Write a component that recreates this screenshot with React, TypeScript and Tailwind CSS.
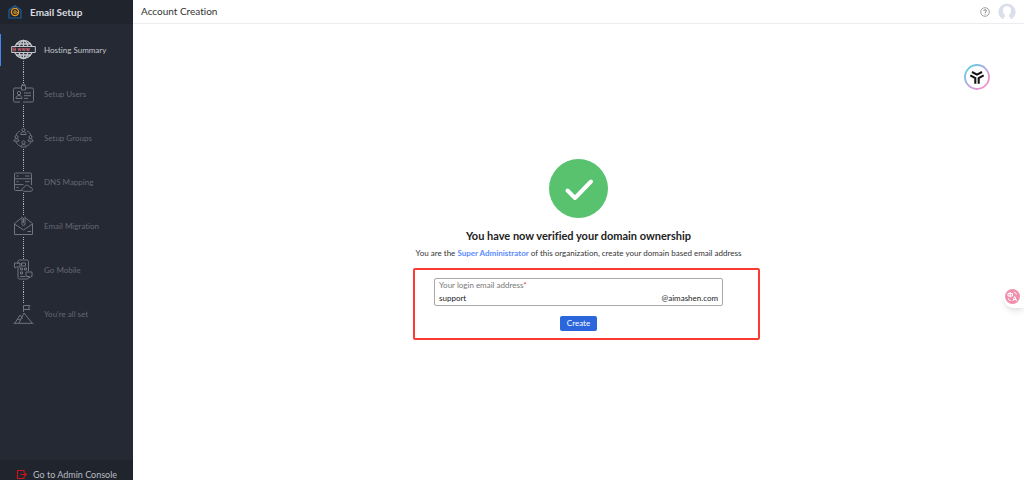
import React from 'react';

interface Step {
  label: string;
  icon: React.ReactNode;
}

const steps: Step[] = [
  {
    label: 'Hosting Summary',
    icon: (
      <>
        <g strokeWidth="1.4">
          <circle cx="12.5" cy="10.5" r="9" />
          <ellipse cx="12.5" cy="10.5" rx="4.5" ry="9" />
          <path d="M12.5 1v19M5 5h15M5 16h15" />
        </g>
        <path d="M.7 7.5h23.6v6H.7z" fill="#252934" />
        <path d="M2 9h2.6v3H2zM2 10.5h2.6M7 9l.8 3 .8-3 .8 3 .8-3M11.2 9l.8 3 .8-3 .8 3 .8-3M15.4 9l.8 3 .8-3 .8 3 .8-3" stroke="#c95f68" strokeWidth=".8" />
      </>
    ),
  },
  {
    label: 'Setup Users',
    icon: (
      <>
        <path d="M10.5 5H4a1.5 1.5 0 0 0-1.5 1.5v11A1.5 1.5 0 0 0 4 19h5M14.5 5H21a1.5 1.5 0 0 1 1.5 1.5v11A1.5 1.5 0 0 1 21 19h-9" />
        <path d="M10.5 2.5h4v4.500h-4zM11.5 2.500V1h2v1.500" />
        <circle cx="8" cy="10" r="1.7" />
        <path d="M5 15.5c0-4 6-4 6 0zM13 10h7M13 12.7h7M13 15.4h4" />
      </>
    ),
  },
  {
    label: 'Setup Groups',
    icon: (
      <>
        <path d="M9 4C7 5 5.6 6.5 5 8.5M16 4c2 1 3.4 2.5 4 4.500M5 15c.8 1.7 2 3 4 4M20 15c-.8 1.7-2 3-4 4" />
        <circle cx="12.5" cy="3" r="1.6" />
        <path d="M9.8 7.5c0-3.6 5.4-3.6 5.4 0z" />
        <circle cx="5.5" cy="10" r="1.5" />
        <path d="M3 14.2c0-3.4 5-3.4 5 0z" />
        <circle cx="19.5" cy="10" r="1.5" />
        <path d="M17 14.2c0-3.4 5-3.4 5 0z" />
        <circle cx="12.5" cy="15.5" r="1.6" />
        <path d="M9.8 20c0-3.6 5.4-3.6 5.4 0z" />
      </>
    ),
  },
  {
    label: 'DNS Mapping',
    icon: (
      <>
        <path d="M4.5 2h15a1 1 0 0 1 1 1v11M11 19.5H4.500a1 1 0 0 1-1-1V3a1 1 0 0 1 1-1M3.5 7.8h17M3.5 13.6h9" />
        <path d="M5.5 5h2M14 5h4.5M5.5 10.7h2M14 10.7h4.5M5.5 16.5h2" />
        <path d="M12.5 20.3c-2.400-1-1.500-3.700.5-3.600.7-3.200 4.900-3.200 5.600-.5 3.300-.2 3.700 3.500 1.500 4.100z" fill="#252934" />
      </>
    ),
  },
  {
    label: 'Email Migration',
    icon: (
      <>
        <path d="M10.5 3 3.5 8.5v11h18v-11L14.5 3" />
        <path d="m3.5 9 9 6 9-6M16.5 16.5H20" />
        <path d="M11 1.5v7.500a1.5 1.5 0 0 0 3 0V1.500M12.5 3v5" />
      </>
    ),
  },
  {
    label: 'Go Mobile',
    icon: (
      <>
        <path d="M7 5V2.500A1.500 1.500 0 0 1 8.500 1H16a1.500 1.500 0 0 1 1.500 1.500V12M7 9v9.500A1.500 1.500 0 0 0 8.500 20H16a1.500 1.500 0 0 0 1.500-1.500V18" />
        <path d="M3.5 4H9v4H5.500L4 9V8h-.5zM15 13h6v4.500h-1L18.500 19v-1.500H15z" />
        <path d="M10.5 4h4v3h-4zM9.5 9h2v2h-2zM13.5 9h2v2h-2zM9.5 13h2v2h-2zM9 17.5h5" />
      </>
    ),
  },
  {
    label: "You're all set",
    icon: (
      <>
        <path d="M2.5 20.3h20" />
        <path d="m4 20 5-8 2.5 3.5M8 20l5-10 8 10M6.5 16l2 1 1.5-1.5" />
        <path d="M12.5 9V2.500h6.300L17.500 5l1.300 1.500h-6.300" />
      </>
    ),
  },
];

function StepItem({ step, index }: { step: Step; index: number }) {
  const active = index === 0;
  const last = index === steps.length - 1;

  return (
    <li className="flex h-11 items-center">
      <span className={active ? 'h-8 w-px bg-[#4285f4]' : 'h-8 w-px'} />
      <span className="ml-2.5 flex h-11 w-[25px] flex-col items-center">
        <span className={active ? 'flex-1' : 'flex-1 border-l border-dotted border-[#b4b6bb]'} />
        <svg
          viewBox="0 0 25 22"
          className={active ? 'h-[22px] w-[25px] text-[#c3c5ca]' : 'h-[22px] w-[25px] text-[#70747d]'}
          fill="none"
          stroke="currentColor"
          strokeWidth="1"
          aria-hidden="true"
        >
          {step.icon}
        </svg>
        <span className={last ? 'flex-1' : 'flex-1 border-l border-dotted border-[#b4b6bb]'} />
      </span>
      <a href="#" className={active ? 'ml-2 text-[#c3c5ca]' : 'ml-2 text-[#646872]'}>
        {step.label}
      </a>
    </li>
  );
}

function Sidebar() {
  return (
    <aside className="flex w-[133px] shrink-0 flex-col overflow-hidden bg-[#252934]">
      <div className="flex h-6 shrink-0 items-center bg-[#20242d] pl-2 text-[10px] font-bold text-[#dcdde0]">
        <svg viewBox="0 0 14 14" className="mr-2 h-3.5 w-3.5" fill="none" aria-hidden="true">
          <path d="M1 5 7 .8 13 5v8H1z" stroke="#1d5f9f" strokeWidth="1.2" />
          <circle cx="7" cy="7" r="3.6" stroke="#e39a24" strokeWidth="1.4" />
          <path d="M5.5 6.5c0-1 3-1 3 0s-3 .2-3 1.200 3 1 4.500-.4" stroke="#e39a24" strokeWidth="1" />
        </svg>
        Email Setup
      </div>
      <ul className="pt-1 text-[8px]">
        {steps.map((step, index) => (
          <StepItem key={step.label} step={step} index={index} />
        ))}
      </ul>
      <a href="#" className="mt-auto flex h-5 shrink-0 items-start bg-[#20242d] pt-2 pl-4 text-[9px] leading-3.5 text-[#b9bbc1]">
        <svg viewBox="0 0 11 12" className="mt-px mr-1.5 h-3 w-[11px]" fill="none" stroke="#c8151b" strokeWidth="1.2" aria-hidden="true">
          <path d="M8 3.500V1.500H1.500v8H8v-2M4.500 5.500h5.500M8.300 3.700l2 1.800-2 1.800" />
        </svg>
        Go to Admin Console
      </a>
    </aside>
  );
}

function Header() {
  return (
    <header className="flex h-6 shrink-0 items-center border-b border-[#ececef] px-2">
      <h1 className="text-[10px] text-[#333]">Account Creation</h1>
      <button type="button" aria-label="Help" className="mr-2 ml-auto">
        <svg viewBox="0 0 10 10" className="h-2.5 w-2.5" fill="none" stroke="#777" aria-hidden="true">
          <circle cx="5" cy="5" r="4.3" strokeWidth=".7" />
          <path d="M3.7 4c0-1.700 2.700-1.700 2.700 0 0 .9-1.300.9-1.300 2M5.100 6.800v.9" strokeWidth=".9" />
        </svg>
      </button>
      <button type="button" aria-label="Profile">
        <svg viewBox="0 0 18 18" className="h-[18px] w-[18px]" aria-hidden="true">
          <path d="M4 16A8.600 8.600 0 1 1 14 16z" fill="#dadfea" />
          <path d="M9 3.200c3.200 0 4.300 2.300 4 5-.2 1.800-.9 3-2 4v1.300l1.500 1v2.500H5.500v-2.500l1.500-1v-1.300c-1.100-1-1.800-2.200-2-4-.3-2.700.8-5 4-5z" fill="#fff" />
        </svg>
      </button>
    </header>
  );
}

function CreateAccountForm() {
  return (
    <form
      onSubmit={(e) => e.preventDefault()}
      className="mt-2 ml-4 flex w-[347px] flex-col items-center rounded-xs border-2 border-[#fb3b32] pt-2 pr-[35px] pb-[7px] pl-[19px]"
    >
      <div className="w-full rounded-xs border border-[#a9a9a9] px-1">
        <label htmlFor="login-email" className="block text-[8px] leading-3 text-[#777]">
          Your login email address<span className="text-[#e53935]">*</span>
        </label>
        <div className="flex items-center text-[8px] leading-3.5 text-[#222]">
          <input
            id="login-email"
            type="text"
            defaultValue="support"
            className="min-w-0 flex-1 bg-transparent outline-none"
          />
          <span>@aimashen.com</span>
        </div>
      </div>
      <button type="submit" className="mt-2.5 h-[15px] rounded-xs bg-[#2b66dd] px-[7px] text-[8px] leading-3.5 text-white">
        Create
      </button>
    </form>
  );
}

export default function App() {
  return (
    <div className="flex h-screen bg-white font-['Lato',sans-serif] [font-variant-ligatures:none]">
      <Sidebar />
      <div className="flex min-w-0 flex-1 flex-col">
        <Header />
        <main className="flex flex-1 flex-col items-center justify-center pb-1.5">
          <svg viewBox="0 0 59 59" className="h-[59px] w-[59px]" aria-hidden="true">
            <circle cx="29.5" cy="29.5" r="29.5" fill="#58c26f" />
            <path d="m18.500 31.500 7.500 7.500 16-16.500" fill="none" stroke="#fff" strokeWidth="4" strokeLinecap="round" strokeLinejoin="round" />
          </svg>
          <h2 className="mt-2.5 text-[11px] leading-4 font-bold text-[#222]">
            You have now verified your domain ownership
          </h2>
          <p className="mt-0.5 text-[8px] leading-3.5 text-[#333]">
            You are the <a href="#" className="font-bold text-[#5b8cff]">Super Administrator</a> of this organization, create your domain based email address
          </p>
          <CreateAccountForm />
        </main>
      </div>

      {/* floating extension badges */}
      <button type="button" aria-label="Assistant" className="fixed top-16 right-[34px]">
        <svg viewBox="0 0 26 26" className="h-[26px] w-[26px]" fill="none" aria-hidden="true">
          <defs>
            <linearGradient id="ring" x1="0" y1="0" x2="1" y2="1">
              <stop offset="0.1" stopColor="#62cfe0" />
              <stop offset="0.5" stopColor="#b6a4e6" />
              <stop offset="0.9" stopColor="#f98fc8" />
            </linearGradient>
          </defs>
          <circle cx="13" cy="13" r="12" fill="#fff" stroke="url(#ring)" strokeWidth="1.8" />
          <path d="m8 8 5 2.600 5-2.600M6.300 11.300l5 2.800v5.600M19.700 11.300l-5 2.800v5.600" stroke="#151515" strokeWidth="2.1" />
        </svg>
      </button>
      <button type="button" aria-label="Translate" className="fixed top-[285px] right-0 rounded-l-full bg-white py-1 pr-1 pl-0.5 shadow-md">
        <svg viewBox="0 0 15 15" className="h-[15px] w-[15px]" fill="none" stroke="#fff" aria-hidden="true">
          <circle cx="7.5" cy="7.5" r="7.5" fill="#f08fae" stroke="none" />
          <path d="M3 4.500h4.500V7H3zM5.200 3v5.500M7.800 12 9.700 7.500l1.900 4.500M8.500 10.500H11M9 3.500c1.500 0 2.300.8 2.300 2M3.500 9.500c0 1.300.8 2 2.300 2" />
        </svg>
      </button>
    </div>
  );
}
